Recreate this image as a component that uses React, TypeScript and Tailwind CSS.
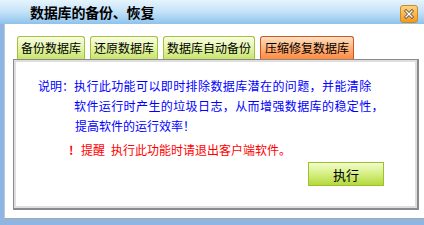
// Database backup / restore dialog — compact-repair tab

const tabs = [
  { label: '备份数据库', width: 'w-[68px]', active: false },
  { label: '还原数据库', width: 'w-[68px]', active: false },
  { label: '数据库自动备份', width: 'w-[92px]', active: false },
  { label: '压缩修复数据库', width: 'w-[94px]', active: true },
];

function CloseButton() {
  return (
    <div className="w-[18px] h-[18px] rounded-[3px] border border-[#c98a2a] bg-gradient-to-b from-[#ffd27a] to-[#f39a12] flex items-center justify-center">
      <svg width="10" height="10" viewBox="0 0 10 10">
        <path d="M2 2 L8 8 M8 2 L2 8" stroke="#5a4a3a" strokeWidth="3" strokeLinecap="square" />
        <path d="M2 2 L8 8 M8 2 L2 8" stroke="#ffffff" strokeWidth="1.4" strokeLinecap="square" />
      </svg>
    </div>
  );
}

export default function App() {
  return (
    <div
      className="w-[424px] h-[225px] flex flex-col bg-[#8fb5e3] overflow-hidden"
      style={{ fontFamily: '"Noto Sans CJK SC", "Liberation Sans", sans-serif' }}
    >
      {/* Title bar */}
      <div className="h-[24px] flex-shrink-0 flex items-center justify-between pl-[30px] pr-[6px] bg-gradient-to-b from-[#e6f4fd] via-[#c3e2f8] to-[#8ec3ec]">
        <span className="text-[14px] font-bold text-black leading-none tracking-[-0.2px]">数据库的备份、恢复</span>
        <div className="mt-[3px]">
          <CloseButton />
        </div>
      </div>

      {/* Window body */}
      <div className="flex-1 min-h-0 pl-[4px] pr-[5px] pb-[6px] flex">
        <div className="flex-1 bg-white border-x border-b border-[#a8a8a8] border-l-[#b8c8d8] flex flex-col pt-[12px] pl-[8px] pr-[9px] pb-[8px]">
          {/* Tabs */}
          <div className="flex gap-[5px] pl-[4px] h-[23px] flex-shrink-0">
            {tabs.map(t => (
              <div
                key={t.label}
                className={`${t.width} h-[23px] rounded-t-[3px] border border-b-0 flex items-center justify-center text-[12px] leading-none text-black ${
                  t.active
                    ? 'border-[#c8582a] bg-gradient-to-b from-[#ffe0c0] via-[#ffb27a] to-[#ff8a3c]'
                    : 'border-[#a4c03c] bg-gradient-to-b from-[#f8fde0] via-[#e4f4a8] to-[#c8e46a]'
                }`}
              >
                {t.label}
              </div>
            ))}
          </div>

          {/* Panel */}
          <div className="flex-1 min-h-0 border-t border-l border-r-2 border-b-2 border-[#8a8a8a] flex">
            <div className="flex-1 border-2 border-[#dedede] bg-white flex flex-col pt-[14px] pl-[22px] pr-[31px] text-[12px] leading-[20px] whitespace-nowrap">
              <div className="flex text-[#0000ff]">
                <span className="w-[36px] flex-shrink-0">说明：</span>
                <span className="tracking-[0.4px]">执行此功能可以即时排除数据库潜在的问题，并能清除</span>
              </div>
              <div className="pl-[36px] text-[#0000ff] tracking-[0.4px]">软件运行时产生的垃圾日志，从而增强数据库的稳定性，</div>
              <div className="pl-[37px] text-[#0000ff]">提高软件的运行效率！</div>

              <div className="mt-[4px] pl-[31px] flex items-center text-[#ff0000]">
                <span className="w-[12px] font-bold">!</span>
                <span>提醒</span>
                <span className="ml-[6px]">执行此功能时请退出客户端软件。</span>
              </div>

              <div className="flex justify-end mt-[2px]">
                <button className="w-[76px] h-[24px] border border-[#9cc226] bg-gradient-to-b from-[#f2fbcc] via-[#d6ef80] to-[#b4d83a] text-[13px] text-black leading-none">
                  执行
                </button>
              </div>
            </div>
          </div>
        </div>
      </div>
    </div>
  );
}
